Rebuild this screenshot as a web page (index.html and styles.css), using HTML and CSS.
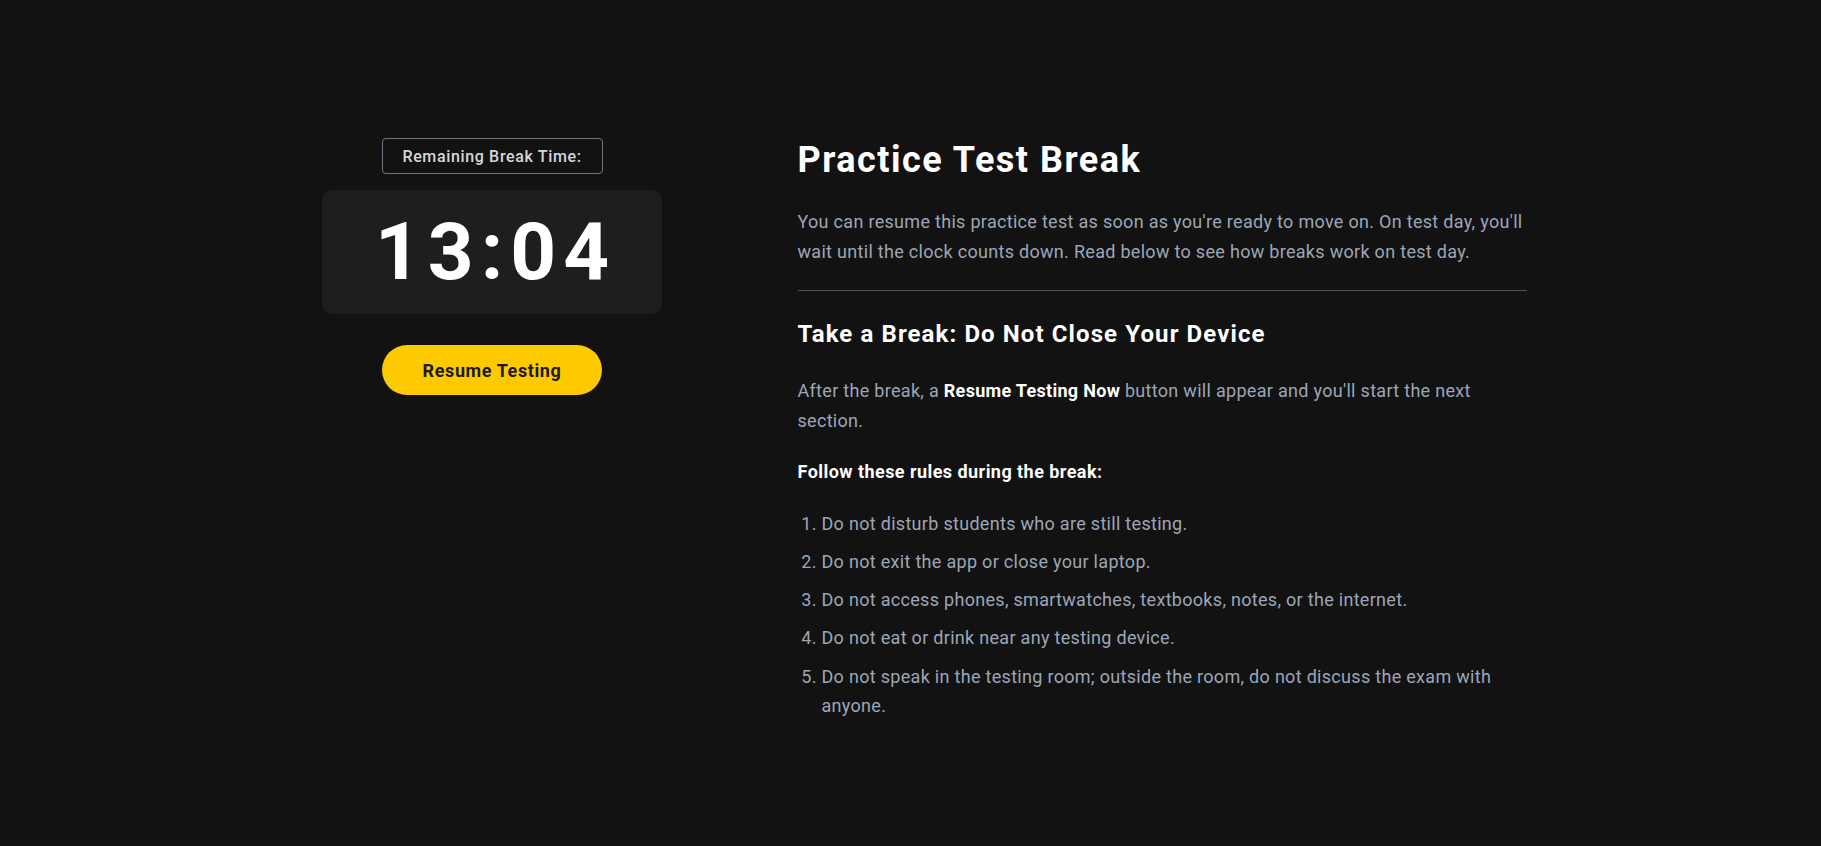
FILE: index.html
```html
<!DOCTYPE html>
<html lang="en">
<head>
<meta charset="utf-8">
<title>Practice Test Break</title>
<link rel="stylesheet" href="styles.css">
</head>
<body>
<main class="layout">
  <section class="timer-col">
    <div class="timer-label">Remaining Break Time:</div>
    <div class="timer-box"><span class="timer-digits">13:04</span></div>
    <button class="resume-btn" type="button">Resume Testing</button>
  </section>
  <section class="info-col">
    <h1 class="title">Practice Test Break</h1>
    <p class="text intro">You can resume this practice test as soon as you're ready to move on. On test day, you'll wait until the clock counts down. Read below to see how breaks work on test day.</p>
    <hr class="divider">
    <h2 class="subtitle">Take a Break: Do Not Close Your Device</h2>
    <p class="text after">After the break, a <strong class="strong">Resume Testing Now</strong> button will appear and you'll start the next section.</p>
    <p class="rules-head">Follow these rules during the break:</p>
    <ol class="rules">
      <li class="rule">Do not disturb students who are still testing.</li>
      <li class="rule">Do not exit the app or close your laptop.</li>
      <li class="rule">Do not access phones, smartwatches, textbooks, notes, or the internet.</li>
      <li class="rule">Do not eat or drink near any testing device.</li>
      <li class="rule">Do not speak in the testing room; outside the room, do not discuss the exam with anyone.</li>
    </ol>
  </section>
</main>
</body>
</html>
```
FILE: styles.css
```css
html, body {
  margin: 0;
  padding: 0;
  background: #121212;
  min-height: 100%;
}

body {
  font-family: Roboto, "Liberation Sans", Arial, sans-serif;
  color: #9ca6b8;
  padding-top: 138px;
  min-height: 708px;
}

.layout {
  width: 1232px;
  margin: 0 auto;
  display: grid;
  grid-template-columns: 395px 1fr;
  column-gap: 108px;
  align-items: start;
}

.timer-col {
  display: flex;
  flex-direction: column;
  align-items: center;
}

.timer-label {
  box-sizing: border-box;
  width: 221px;
  height: 36px;
  border: 1px solid #6f7580;
  border-radius: 4px;
  display: flex;
  align-items: center;
  justify-content: center;
  font-size: 16px;
  font-weight: 500;
  letter-spacing: 0.65px;
  color: #d4d8de;
}

.timer-box {
  box-sizing: border-box;
  margin-top: 16px;
  width: 340px;
  height: 124px;
  background: #1e1e1e;
  border-radius: 10px;
  display: flex;
  align-items: center;
  justify-content: center;
}

.timer-digits {
  font-size: 80px;
  line-height: 80px;
  font-weight: 700;
  color: #ffffff;
  letter-spacing: 7px;
  padding-left: 7px;
}

.resume-btn {
  margin-top: 31px;
  width: 220px;
  height: 50px;
  border: none;
  border-radius: 25px;
  background: #fdca00;
  color: #1b1b1b;
  font-family: Roboto, "Liberation Sans", Arial, sans-serif;
  font-size: 18px;
  font-weight: 700;
  letter-spacing: 0.6px;
  cursor: pointer;
}

.info-col {
  display: flex;
  flex-direction: column;
}

.title {
  margin: 0;
  font-size: 36px;
  line-height: 44px;
  font-weight: 700;
  letter-spacing: 1.5px;
  color: #ffffff;
}

.text {
  margin: 0;
  font-size: 18px;
  line-height: 29.5px;
  letter-spacing: 0.3px;
}

.intro {
  margin-top: 25px;
}

.divider {
  margin: 24px 0 0;
  border: none;
  height: 1px;
  background: #4b5260;
}

.subtitle {
  margin: 27px 0 0;
  font-size: 24px;
  line-height: 32px;
  font-weight: 700;
  letter-spacing: 1.1px;
  color: #ffffff;
}

.after {
  margin-top: 26px;
}

.strong {
  color: #ffffff;
  font-weight: 700;
}

.rules-head {
  margin: 22px 0 0;
  font-size: 18px;
  line-height: 29.5px;
  font-weight: 700;
  letter-spacing: 0.45px;
  color: #ffffff;
}

.rules {
  margin: 22px 0 0;
  padding-left: 24px;
  font-size: 18px;
  line-height: 29.5px;
  letter-spacing: 0.3px;
}

.rule {
  margin-bottom: 8.8px;
}
```
